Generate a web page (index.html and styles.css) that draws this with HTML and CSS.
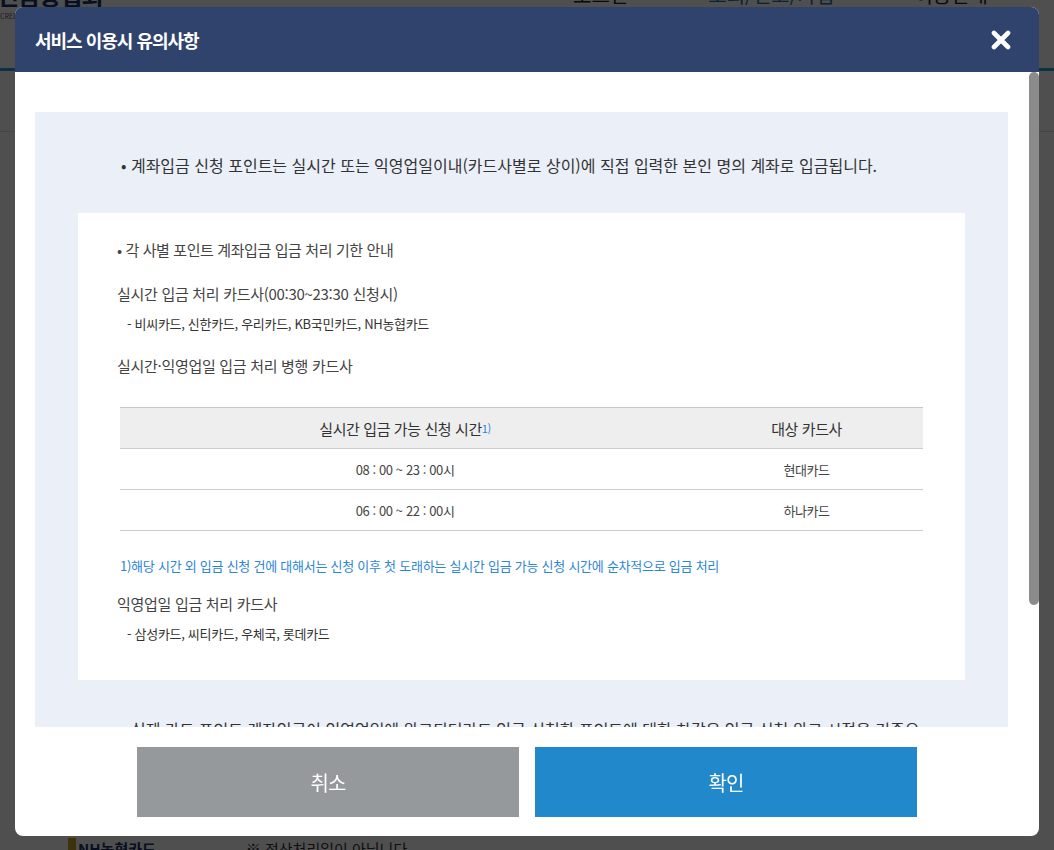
FILE: index.html
```html
<!DOCTYPE html>
<html lang="ko">
<head>
    <meta charset="UTF-8">
    <meta name="viewport" content="width=device-width, initial-scale=1.0">
    <title>서비스 이용시 유의사항</title>
    <link rel="stylesheet" href="styles.css">
</head>
<body>
    <div class="page">
        <div class="page-top">
            <div class="logo">
                <span class="logo-name">여신금융협회</span>
                <span class="logo-en">CREDIT FINANCE ASSOCIATION</span>
            </div>
            <ul class="gnb">
                <li>로그인</li>
                <li class="on">조회/신고/가입</li>
                <li>이용안내</li>
            </ul>
        </div>
        <div class="page-sub"></div>
        <div class="page-content">
            <span class="card-name">NH농협카드</span>
            <span class="card-note">※ 전산처리일이 아닙니다</span>
        </div>
    </div>

    <div class="dim">
        <div class="modal">
            <div class="modal-header">
                <h2>서비스 이용시 유의사항</h2>
                <button class="btn-close" aria-label="닫기">
                    <svg width="20" height="20" viewBox="0 0 20 20">
                        <path d="M3 3 L17 17 M17 3 L3 17" stroke="#fff" stroke-width="4.6" stroke-linecap="round"/>
                    </svg>
                </button>
            </div>

            <div class="modal-body">
                <div class="scroll-area">
                    <div class="notice-box">
                        <p class="notice">• 계좌입금 신청 포인트는 실시간 또는 익영업일이내(카드사별로 상이)에 직접 입력한 본인 명의 계좌로 입금됩니다.</p>

                        <div class="detail-box">
                            <p class="detail-title">• 각 사별 포인트 계좌입금 입금 처리 기한 안내</p>

                            <p class="detail-head">실시간 입금 처리 카드사(00:30~23:30 신청시)</p>
                            <p class="detail-list">- 비씨카드, 신한카드, 우리카드, KB국민카드, NH농협카드</p>

                            <p class="detail-head gap">실시간·익영업일 입금 처리 병행 카드사</p>
                            <table class="time-table">
                                <colgroup>
                                    <col class="col-time">
                                    <col>
                                </colgroup>
                                <thead>
                                    <tr>
                                        <th>실시간 입금 가능 신청 시간<span class="ref">1)</span></th>
                                        <th>대상 카드사</th>
                                    </tr>
                                </thead>
                                <tbody>
                                    <tr>
                                        <td>08 : 00 ~ 23 : 00시</td>
                                        <td>현대카드</td>
                                    </tr>
                                    <tr>
                                        <td>06 : 00 ~ 22 : 00시</td>
                                        <td>하나카드</td>
                                    </tr>
                                </tbody>
                            </table>
                            <p class="footnote">1)해당 시간 외 입금 신청 건에 대해서는 신청 이후 첫 도래하는 실시간 입금 가능 신청 시간에 순차적으로 입금 처리</p>

                            <p class="detail-head mid">익영업일 입금 처리 카드사</p>
                            <p class="detail-list">- 삼성카드, 씨티카드, 우체국, 롯데카드</p>
                        </div>

                        <p class="notice">• 실제 카드 포인트 계좌입금이 익영업일에 완료되더라도 입금 신청한 포인트에 대한 차감은 입금 신청 완료 시점을 기준으로 합니다.</p>
                    </div>
                </div>
                <div class="scrollbar">
                    <div class="scroll-thumb"></div>
                </div>
            </div>

            <div class="modal-footer">
                <button class="btn btn-cancel">취소</button>
                <button class="btn btn-ok">확인</button>
            </div>
        </div>
    </div>
</body>
</html>
```

FILE: styles.css
```css
body {
    margin: 0;
    font-family: "Noto Sans CJK KR", "Noto Sans", sans-serif;
    color: #333;
    background-color: #fff;
    overflow: hidden;
}
p, h2, ul {
    margin: 0;
    padding: 0;
}

/* page behind the dim layer */
.page-top {
    display: flex;
    justify-content: space-between;
    height: 86px;
    margin-top: -18px;
    border-bottom: 3px solid #2a9ad8;
}
.logo {
    display: flex;
    flex-direction: column;
    margin-left: -24px;
}
.logo-name {
    font-size: 24px;
    font-weight: bold;
    color: #1b3566;
    line-height: 26px;
    letter-spacing: -1px;
}
.logo-en {
    font-size: 7px;
    color: #666;
    margin-top: 3px;
    padding-left: 24px;
}
.gnb {
    display: flex;
    list-style: none;
    gap: 80px;
    padding-right: 66px;
    font-size: 20px;
    line-height: 26px;
    color: #222;
}
.gnb .on {
    color: #1f6fb0;
}
.page-sub {
    height: 60px;
    border-bottom: 1px solid #ddd;
}
.page-content {
    display: flex;
    gap: 90px;
    padding: 706px 0 0 68px;
    font-size: 15px;
}
.card-name {
    color: #1b3566;
    font-weight: bold;
    border-left: 8px solid #c9a227;
    padding-left: 2px;
}

/* dim + modal */
.dim {
    position: fixed;
    inset: 0;
    background-color: rgba(0, 0, 0, 0.69);
    display: flex;
    justify-content: center;
    align-items: flex-start;
    padding-top: 7px;
}
.modal {
    width: 1024px;
    height: 829px;
    background-color: #fff;
    border-radius: 8px;
    overflow: hidden;
    display: flex;
    flex-direction: column;
}
.modal-header {
    flex: none;
    height: 65px;
    display: flex;
    align-items: center;
    justify-content: space-between;
    padding: 0 28px 0 20px;
    background-color: #30436d;
}
.modal-header h2 {
    font-size: 18px;
    font-weight: bold;
    color: #fff;
    letter-spacing: -1px;
}
.btn-close {
    display: flex;
    padding: 0;
    border: 0;
    background: none;
}
.modal-body {
    flex: none;
    height: 655px;
    display: flex;
}
.scroll-area {
    flex: 1;
    overflow: hidden;
    padding: 40px 21px 0 20px;
}
.scrollbar {
    flex: none;
    width: 10px;
}
.scroll-thumb {
    height: 533px;
    background-color: #8b8b8b;
    border-radius: 5px;
}
.notice-box {
    background-color: #eaeff8;
    padding: 40px 43px 69px;
}
.notice {
    padding: 0 43px;
    font-size: 16px;
    line-height: 26px;
    color: #333;
}
.detail-box {
    background-color: #fff;
    margin: 35px 0 36px;
    padding: 26px 39px 35px;
    color: #444;
}
.detail-title,
.detail-head {
    font-size: 15px;
    line-height: 22px;
    letter-spacing: -0.4px;
}
.detail-head {
    margin-top: 22px;
    letter-spacing: -0.3px;
}
.detail-head.gap {
    margin-top: 20px;
}
.detail-head.mid {
    margin-top: 16px;
}
.detail-list {
    margin-top: 8px;
    padding-left: 10px;
    font-size: 13px;
    line-height: 22px;
    letter-spacing: -0.3px;
    color: #333;
}
.time-table {
    width: calc(100% - 6px);
    margin: 30px 3px 0;
    border-collapse: collapse;
    border-top: 1px solid #c8c8c8;
}
.col-time {
    width: 71%;
}
.time-table th {
    height: 40px;
    padding: 0;
    background-color: #eee;
    border-bottom: 1px solid #ccc;
    font-size: 15px;
    font-weight: normal;
    letter-spacing: -0.4px;
    color: #333;
}
.time-table td {
    height: 40px;
    padding: 0;
    text-align: center;
    border-bottom: 1px solid #ccc;
    font-size: 13px;
    letter-spacing: -0.4px;
    color: #444;
}
.time-table .ref {
    font-size: 11px;
    color: #2b86d6;
    vertical-align: 2px;
}
.footnote {
    margin-top: 24px;
    padding-left: 3px;
    font-size: 13px;
    line-height: 22px;
    letter-spacing: -0.25px;
    color: #2b86d6;
}
.modal-footer {
    display: flex;
    justify-content: center;
    gap: 16px;
    padding-top: 20px;
}
.btn {
    width: 382px;
    height: 70px;
    border: 0;
    font-family: inherit;
    font-size: 20px;
    color: #fff;
    letter-spacing: -1px;
}
.btn-cancel {
    background-color: #95999c;
}
.btn-ok {
    background-color: #2188cb;
}
```
